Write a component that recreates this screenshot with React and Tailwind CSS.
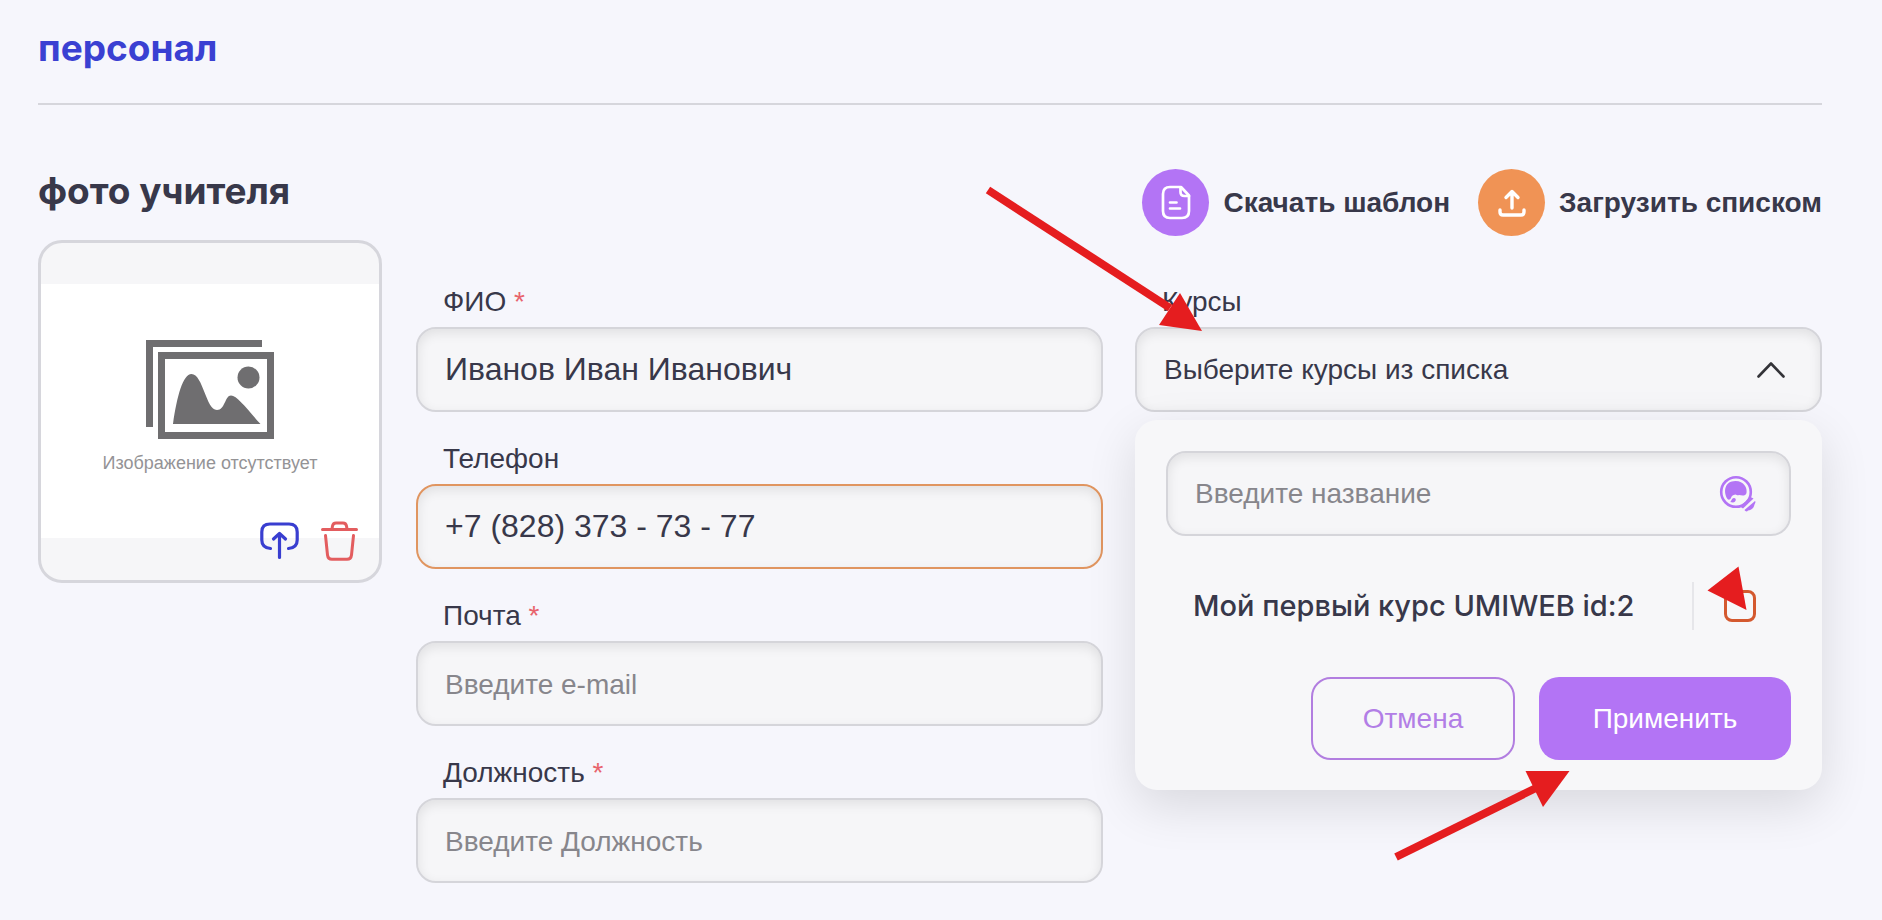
import { useState } from 'react';

const fieldClass =
  'h-[85px] w-full rounded-[20px] border-2 bg-[#f6f6f8] px-[27px] text-[#38384a] shadow-[inset_0_4px_12px_rgba(0,0,0,0.09)] outline-none placeholder:text-[28px] placeholder:text-[#87868c]';

function Field({ id, label, required, accent, ...props }) {
  return (
    <div className="flex flex-col">
      <label htmlFor={id} className="mb-[7px] pl-[27px] text-[28px] leading-9">
        {label}
        {required && <span className="text-[#e8636c]"> *</span>}
      </label>
      <input
        id={id}
        className={`${fieldClass} text-[32px] ${accent ? 'border-[#e09560]' : 'border-[#d5d5da]'}`}
        {...props}
      />
    </div>
  );
}

function NoImageIcon() {
  return (
    <svg width="128" height="99" viewBox="0 0 128 99" fill="#6f6e70" aria-hidden="true">
      <path d="M0 0H116V7H7V87H0Z" />
      <path fillRule="evenodd" d="M12 12H128V99H12ZM19 19V92H121V19Z" />
      <circle cx="102.500" cy="37.500" r="11" />
      <path d="M27 84C31 56 37 34 45.500 34C57 34 60 70 71 70C79 70 79 55.500 85 55.500C91 55.500 101 69 114.500 84Z" />
    </svg>
  );
}

function UploadPhotoIcon() {
  return (
    <svg width="40" height="40" viewBox="0 0 40 40" fill="none" stroke="#393ed0" strokeWidth="3.200" strokeLinecap="round" strokeLinejoin="round" aria-hidden="true">
      <path d="M10.500 27.500C5 27 1.800 25 1.800 19V11C1.800 5.500 4.500 3 10 3H29C34.500 3 37.200 5.500 37.200 11V19C37.200 25 34 27 28.500 27.500" />
      <path d="M19.500 36.500V12.500M13.500 18L19.500 12.500L25.500 18" />
    </svg>
  );
}

function TrashIcon() {
  return (
    <svg width="37" height="40" viewBox="0 0 37 40" fill="none" stroke="#e35d5f" strokeWidth="3" strokeLinecap="round" strokeLinejoin="round" aria-hidden="true">
      <path d="M1.500 8.500H35.500" />
      <path d="M11 8L11.500 5Q12 2 15 2H22Q25 2 25.500 5L26 8" />
      <path d="M4.500 14.500L6.500 34Q7 38.200 11 38.200H26Q30 38.200 30.500 34L32.500 14.500" />
    </svg>
  );
}

function TemplateIcon() {
  return (
    <svg width="30" height="35" viewBox="0 0 30 35" fill="none" stroke="white" strokeWidth="2.700" strokeLinecap="round" strokeLinejoin="round" aria-hidden="true">
      <path d="M20 2H9C4.500 2 2 4.500 2 9V26C2 30.500 4.500 33 9 33H21C25.500 33 28 30.500 28 26V10.500Z" />
      <path d="M19.500 2.500V7Q19.500 11 23.500 11H28" />
      <path d="M9 17.500H15.500M9 23.500H19" />
    </svg>
  );
}

function UploadListIcon() {
  return (
    <svg width="28" height="28" viewBox="0 0 28 28" fill="none" stroke="white" strokeWidth="3.400" strokeLinecap="round" strokeLinejoin="round" aria-hidden="true">
      <path d="M2 21V23Q2 26 5 26H23Q26 26 26 23V21" />
      <path d="M14 19V2.500M8 8.500L14 2.500L20 8.500" />
    </svg>
  );
}

function BulbIcon() {
  return (
    <svg width="37" height="37" viewBox="0 0 37 37" fill="#b374f5" aria-hidden="true">
      <circle cx="17" cy="17" r="14.800" fill="none" stroke="#b374f5" strokeWidth="2.600" />
      <path d="M8.500 24C4 17 5.500 6 16.500 6C25 6 28.500 13 27.500 18C26.500 21.500 22.500 20.500 20 20C18.500 21 17.500 19.500 16.500 19.500C13.500 20 12.500 21 12 23C11 25 9.500 25 8.500 24Z" />
      <path d="M11 27C12.500 27 12 23.500 15 23C18 23 17 27.500 14 27.500Z" />
      <path d="M21 31.500L31.500 22L34.500 23.500L24 33.500Z" />
      <path d="M25.500 35L36 26C37 27 36 28.500 35.500 29.500C35 33 32 35.500 29 35.500C28 36.500 27 37 25.500 35Z" />
    </svg>
  );
}

// Red guide arrows drawn over the form
function Pointers() {
  return (
    <svg className="pointer-events-none absolute inset-0 z-20 h-full w-full" fill="#e51d1f" aria-hidden="true">
      <path d="M988 190L1170 308" stroke="#e51d1f" strokeWidth="8" />
      <path d="M1180 293L1202 331L1159 325Z" />
      <path d="M1738.500 566.500L1707.500 590.500L1746.500 610Z" />
      <path d="M1396 857L1536 788" stroke="#e51d1f" strokeWidth="8" />
      <path d="M1525.500 771H1569.500L1543 807Z" />
    </svg>
  );
}

export default function App() {
  const [open, setOpen] = useState(true);
  const [checked, setChecked] = useState(false);

  return (
    <div className="relative min-h-screen overflow-hidden bg-[#f6f6fc] pr-[60px] pb-9 pl-[38px] font-['Liberation_Sans',sans-serif] text-[#38384a]">
      <header className="border-b-2 border-[#d6d6dc] pt-6 pb-[31px]">
        <h1 className="font-['Inter',sans-serif] text-[37px] leading-12 font-bold text-[#3a40d2]">персонал</h1>
      </header>

      <main className="flex gap-[34px] pt-16">
        <aside className="w-[344px] shrink-0">
          <h2 className="font-['Inter',sans-serif] text-[37px] leading-11 font-bold">фото учителя</h2>
          <div className="relative mt-[27px] h-[343px] overflow-hidden rounded-[24px] border-3 border-[#d6d6dc] bg-[#f6f6f8]">
            <div className="mt-[41px] flex h-[254px] flex-col items-center bg-white pt-14">
              <NoImageIcon />
              <p className="mt-3 text-[18px] leading-6 text-[#949396]">Изображение отсутствует</p>
            </div>
            <div className="absolute right-[21px] bottom-[19px] flex gap-[21px]">
              <button type="button" aria-label="Загрузить фото"><UploadPhotoIcon /></button>
              <button type="button" aria-label="Удалить фото"><TrashIcon /></button>
            </div>
          </div>
        </aside>

        <div className="min-w-0 flex-1">
          <div className="flex justify-end gap-7 text-[28px] font-bold">
            <button type="button" className="flex items-center gap-[14px]">
              <span className="flex size-[67px] items-center justify-center rounded-full bg-[#b374f5]">
                <TemplateIcon />
              </span>
              Скачать шаблон
            </button>
            <button type="button" className="flex items-center gap-[14px]">
              <span className="flex size-[67px] items-center justify-center rounded-full bg-[#f09355]">
                <UploadListIcon />
              </span>
              Загрузить списком
            </button>
          </div>

          <div className="mt-12 grid grid-cols-2 gap-8">
            <form className="flex flex-col gap-[29px]">
              <Field id="name" label="ФИО" required defaultValue="Иванов Иван Иванович" />
              <Field id="phone" label="Телефон" type="tel" accent defaultValue="+7 (828) 373 - 73 - 77" />
              <Field id="email" label="Почта" required type="email" placeholder="Введите e-mail" />
              <Field id="position" label="Должность" required placeholder="Введите Должность" />
            </form>

            <div>
              <label htmlFor="courses" className="mb-[7px] block pl-[27px] text-[28px] leading-9">Курсы</label>
              <div className="relative">
                <button
                  id="courses"
                  type="button"
                  aria-haspopup="dialog"
                  aria-expanded={open}
                  onClick={() => setOpen(!open)}
                  className={`${fieldClass} flex items-center justify-between border-[#d5d5da] pr-[35px] text-[28px]`}
                >
                  Выберите курсы из списка
                  <svg width="28" height="16" viewBox="0 0 28 16" fill="none" stroke="#333338" strokeWidth="2.600" strokeLinecap="round" strokeLinejoin="round" aria-hidden="true">
                    <path d="M1.500 14.500L14 1.500L26.500 14.500" />
                  </svg>
                </button>

                {open && (
                  <div className="absolute top-full right-0 left-0 z-10 mt-2 rounded-[22px] bg-[#f7f7f9] px-[31px] pt-[31px] pb-[30px] shadow-[0_16px_50px_rgba(0,0,0,0.12)]">
                    <div className="relative">
                      <input
                        type="text"
                        aria-label="Введите название"
                        placeholder="Введите название"
                        className={`${fieldClass} border-[#d5d5da] text-[28px]`}
                      />
                      <span className="absolute inset-y-0 right-[35px] flex items-center">
                        <BulbIcon />
                      </span>
                    </div>

                    <div className="mt-[46px] flex items-center pr-[35px] pl-[27px]">
                      <label htmlFor="course-2" className="flex-1 font-['Inter',sans-serif] text-[29px] leading-12 font-medium">
                        Мой первый курс UMIWEB id:2
                      </label>
                      <span className="h-12 w-0.5 bg-[#e6e6ea]" />
                      <input
                        id="course-2"
                        type="checkbox"
                        checked={checked}
                        onChange={(e) => setChecked(e.target.checked)}
                        className="ml-[30px] size-8 appearance-none rounded-lg border-3 border-[#d4592f] checked:bg-[#d4592f]"
                      />
                    </div>

                    <div className="mt-[47px] flex justify-end gap-6 text-[28px]">
                      <button
                        type="button"
                        onClick={() => setOpen(false)}
                        className="h-[83px] w-[204px] rounded-[20px] border-2 border-[#b27ee0] text-[#b27ee6]"
                      >
                        Отмена
                      </button>
                      <button
                        type="button"
                        onClick={() => setOpen(false)}
                        className="h-[83px] w-[252px] rounded-[20px] bg-[#b374f5] text-white"
                      >
                        Применить
                      </button>
                    </div>
                  </div>
                )}
              </div>
            </div>
          </div>
        </div>
      </main>

      <Pointers />
    </div>
  );
}
